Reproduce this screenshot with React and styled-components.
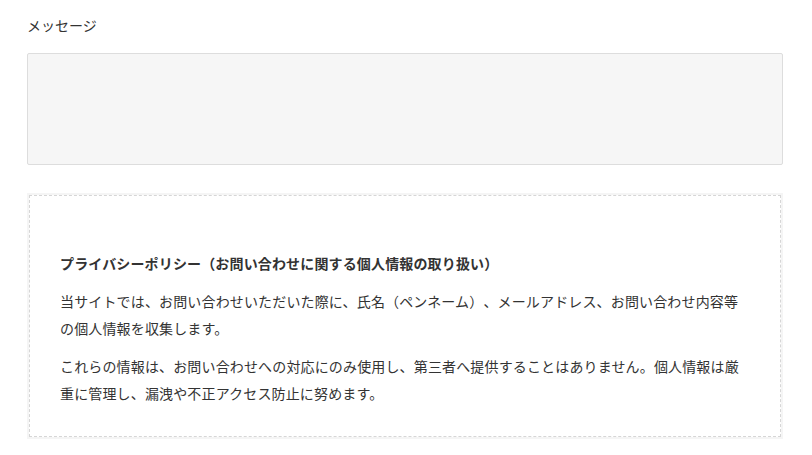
import React from "react";
import styled, { createGlobalStyle } from "styled-components";

const GlobalStyle = createGlobalStyle`
  html, body {
    margin: 0;
    padding: 0;
    background: #ffffff;
  }
  body {
    font-family: "Noto Sans CJK JP", "Noto Sans", sans-serif;
    color: #333333;
  }
`;

const Page = styled.div`
  padding: 12px 29px 0 27px;
`;

const Label = styled.div`
  font-size: 14px;
  line-height: 27px;
  color: #333333;
  margin-bottom: 14px;
`;

const TextArea = styled.textarea`
  display: block;
  box-sizing: border-box;
  width: 100%;
  height: 112px;
  margin: 0;
  background: #f6f6f6;
  border: 1px solid #dddddd;
  border-radius: 2px;
  resize: none;
  outline: none;
  font-family: inherit;
`;

const PolicyFrame = styled.div`
  margin-top: 28px;
  padding: 2px;
  background: #f5f5f5;
`;

const Policy = styled.div`
  background: #ffffff;
  border: 1px dashed #d6d6d6;
  padding: 54px 32px 29px 30px;
  font-size: 14px;
  line-height: 27px;
  letter-spacing: 0.15px;
  text-spacing-trim: space-all;
  color: #333333;
`;

const PolicyTitle = styled.div`
  font-weight: 700;
  margin-bottom: 11px;
`;

const PolicyText = styled.p`
  margin: 0 0 ${(p) => (p.$last ? 0 : 11)}px;
`;

export default function App() {
  return (
    <>
      <GlobalStyle />
      <Page>
        <Label>メッセージ</Label>
        <TextArea />
        <PolicyFrame>
          <Policy>
            <PolicyTitle>
              プライバシーポリシー（お問い合わせに関する個人情報の取り扱い）
            </PolicyTitle>
            <PolicyText>
              当サイトでは、お問い合わせいただいた際に、氏名（ペンネーム）、メールアドレス、お問い合わせ内容等の個人情報を収集します。
            </PolicyText>
            <PolicyText $last>
              これらの情報は、お問い合わせへの対応にのみ使用し、第三者へ提供することはありません。個人情報は厳重に管理し、漏洩や不正アクセス防止に努めます。
            </PolicyText>
          </Policy>
        </PolicyFrame>
      </Page>
    </>
  );
}
